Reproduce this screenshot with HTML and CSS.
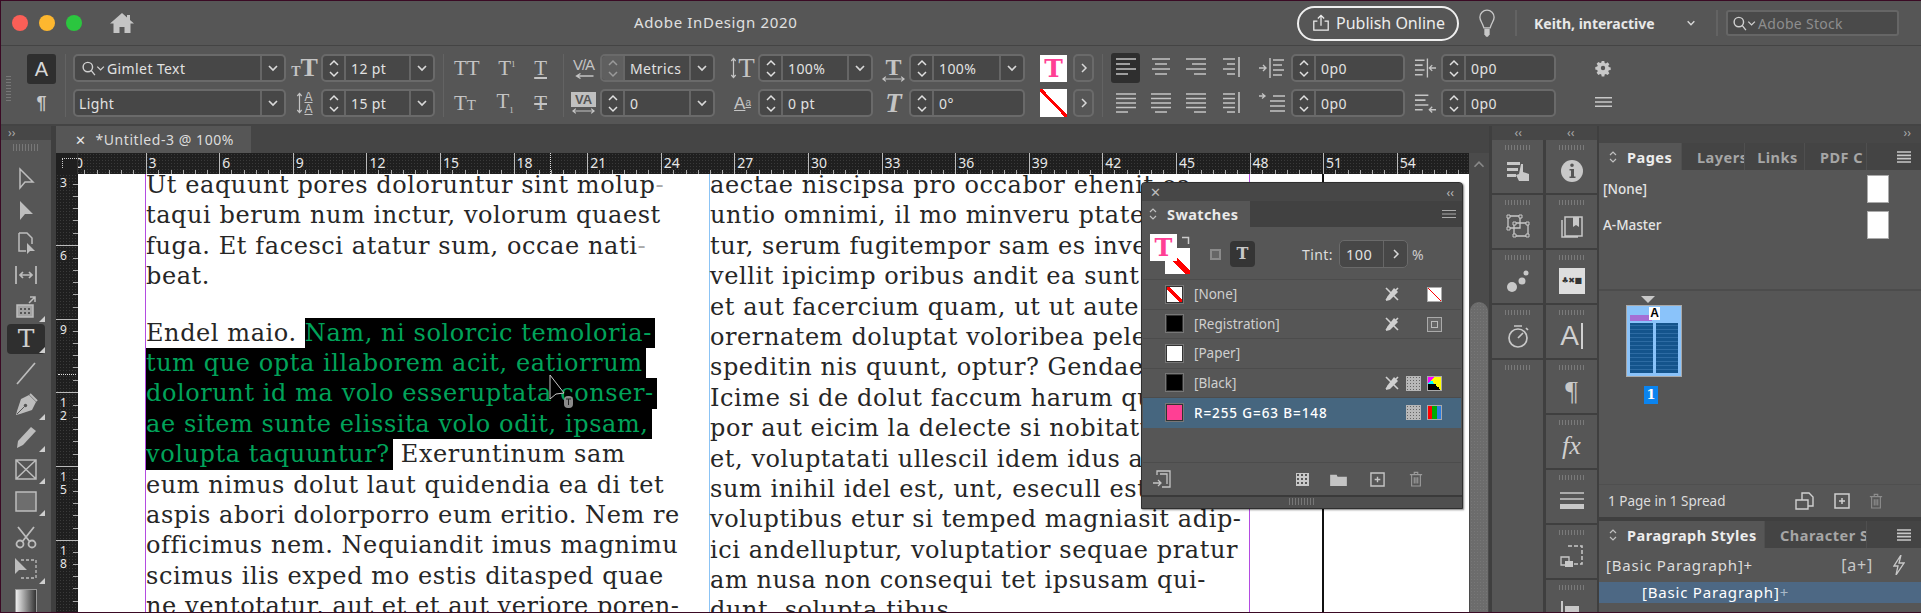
FILE: index.html
```html
<!DOCTYPE html>
<html lang="en">
<head>
<meta charset="utf-8">
<title>Adobe InDesign 2020</title>
<link rel="stylesheet" href="styles.css">
</head>
<body>
<svg class="defs" width="0" height="0" aria-hidden="true">
  <defs>
    <symbol id="chev" viewBox="0 0 12 12"><path d="M2 4l4 4 4-4" fill="none" stroke="currentColor" stroke-width="1.7"/></symbol>
    <symbol id="up" viewBox="0 0 12 8"><path d="M2 6l4-4 4 4" fill="none" stroke="currentColor" stroke-width="1.5"/></symbol>
    <symbol id="down" viewBox="0 0 12 8"><path d="M2 2l4 4 4-4" fill="none" stroke="currentColor" stroke-width="1.5"/></symbol>
    <symbol id="right" viewBox="0 0 12 12"><path d="M4 2l4 4-4 4" fill="none" stroke="currentColor" stroke-width="1.5"/></symbol>
    <symbol id="search" viewBox="0 0 28 18"><circle cx="8" cy="7.5" r="5" fill="none" stroke="currentColor" stroke-width="1.5"/><path d="M11.5 11l4 5M18 7l3.5 3.5L25 7" fill="none" stroke="currentColor" stroke-width="1.4"/></symbol>
    <symbol id="ham" viewBox="0 0 18 12"><path d="M0 1.5h18M0 6h18M0 10.500h18" stroke="currentColor" stroke-width="1.6"/></symbol>
    <symbol id="ham4" viewBox="0 0 14 12"><path d="M0 1h14M0 4.300h14M0 7.600h14M0 11h14" stroke="currentColor" stroke-width="1.7"/></symbol>
    <symbol id="updown" viewBox="0 0 10 14"><path d="M2 5l3-3 3 3M2 9l3 3 3-3" fill="none" stroke="currentColor" stroke-width="1.2"/></symbol>
    <symbol id="trash" viewBox="0 0 16 18"><path d="M1 4h14M6 4V1.500h4V4M3 4v13h10V4M6 7v7M8 7v7M10 7v7" fill="none" stroke="currentColor" stroke-width="1.3"/></symbol>
    <symbol id="plus" viewBox="0 0 16 16"><path d="M1 1h14v14H1zM8 5v6M5 8h6" fill="none" stroke="currentColor" stroke-width="1.5"/></symbol>
    <symbol id="nopen" viewBox="0 0 16 16"><path d="M2 2l12 12M14 2L2 14" stroke="currentColor" stroke-width="1.6"/><path d="M10 2l4 4-8 8-4 1 1-4z" fill="currentColor"/></symbol>
    <symbol id="al1" viewBox="0 0 20 22"><path d="M0 2h20M0 7h14M0 12h20M0 17h12" stroke="currentColor" stroke-width="1.6"/></symbol>
    <symbol id="al2" viewBox="0 0 20 22"><path d="M1 2h18M4 7h12M1 12h18M4 17h12" stroke="currentColor" stroke-width="1.6"/></symbol>
    <symbol id="al3" viewBox="0 0 20 22"><path d="M0 2h20M6 7h14M0 12h20M8 17h12" stroke="currentColor" stroke-width="1.6"/></symbol>
    <symbol id="al4" viewBox="0 0 20 22"><path d="M2 2h12M6 7h8M2 12h12M6 17h8M18 0v20" stroke="currentColor" stroke-width="1.6"/></symbol>
    <symbol id="al5" viewBox="0 0 20 22"><path d="M0 2h20M0 6.500h20M0 11h20M0 15.500h20M0 20h12" stroke="currentColor" stroke-width="1.6"/></symbol>
    <symbol id="al6" viewBox="0 0 20 22"><path d="M0 2h20M0 6.500h20M0 11h20M0 15.500h20M4 20h12" stroke="currentColor" stroke-width="1.6"/></symbol>
    <symbol id="al7" viewBox="0 0 20 22"><path d="M0 2h20M0 6.500h20M0 11h20M0 15.500h20M8 20h12" stroke="currentColor" stroke-width="1.6"/></symbol>
    <symbol id="al8" viewBox="0 0 20 22"><path d="M2 2h12M2 6.500h12M2 11h12M2 15.500h12M6 20h8M18 0v21" stroke="currentColor" stroke-width="1.6"/></symbol>
    <symbol id="ind1" viewBox="0 0 28 22"><path d="M0 11h6M4 8l3 3-3 3" fill="none" stroke="currentColor" stroke-width="1.4"/><path d="M11 1v20" stroke="currentColor" stroke-width="1.4"/><path d="M14 3h11M14 8h9M14 13h11M14 18h9" stroke="currentColor" stroke-width="1.6"/></symbol>
    <symbol id="ind2" viewBox="0 0 24 22"><path d="M1 3h10M1 8h8M1 13h10M1 18h8" stroke="currentColor" stroke-width="1.6"/><path d="M14 1v20M23 11h-6M19 8l-3 3 3 3" fill="none" stroke="currentColor" stroke-width="1.4"/></symbol>
    <symbol id="ind3" viewBox="0 0 28 22"><path d="M0 4h5M3 1.500L6 4 3 6.500" fill="none" stroke="currentColor" stroke-width="1.3"/><path d="M14 4h12M11 9h15M11 14h15M11 19h15" stroke="currentColor" stroke-width="1.6"/></symbol>
    <symbol id="ind4" viewBox="0 0 24 22"><path d="M1 3h14M1 8h11M1 13h14M1 18h8" stroke="currentColor" stroke-width="1.6"/><path d="M23 18h-6M19 15l-3 3 3 3" fill="none" stroke="currentColor" stroke-width="1.4"/></symbol>
    <symbol id="arrL" viewBox="0 0 20 6"><path d="M20 3H4M7 .5L3 3l4 2.500" fill="none" stroke="currentColor" stroke-width="1.300"/></symbol>
    <symbol id="arrLR" viewBox="0 0 24 6"><path d="M1 3h22M4 .5L1 3l3 2.500M20 .5L23 3l-3 2.500" fill="none" stroke="currentColor" stroke-width="1.300"/></symbol>
    <symbol id="arrUD" viewBox="0 0 8 24"><path d="M4 1v22M1.500 4L4 1l2.500 3M1.500 20L4 23l2.500-3" fill="none" stroke="currentColor" stroke-width="1.400"/></symbol>
  </defs>
</svg>

<div class="app">
  <header class="titlebar">
    <div class="lights">
      <span class="light red"></span><span class="light amber"></span><span class="light green"></span>
    </div>
    <svg class="home" viewBox="0 0 24 20"><path d="M12 0L0 10.500h3.500V20h6v-6h5v6h6v-9.500H24l-4-3.500V2h-3v2.400z" fill="currentColor"/></svg>
    <div class="apptitle">Adobe InDesign 2020</div>
    <button class="publish">
      <svg viewBox="0 0 20 20"><path d="M10 13V2M6.500 5L10 1.500 13.500 5M6 8H2v10h16V8h-4" fill="none" stroke="currentColor" stroke-width="1.4"/></svg>
      Publish Online
    </button>
    <svg class="bulb" viewBox="0 0 18 32"><path d="M9 1a8 8 0 0 0-8 8c0 4 3 6 4.500 12h7C14 15 17 13 17 9a8 8 0 0 0-8-8z" fill="none" stroke="currentColor" stroke-width="1.5"/><path d="M6 22h6v6l-2 3H8l-2-3z" fill="currentColor"/></svg>
    <span class="vsep s1"></span>
    <div class="user">Keith, interactive</div>
    <svg class="ic ic10 userchev"><use href="#chev"/></svg>
    <span class="vsep s2"></span>
    <div class="stock"><svg class="sicon"><use href="#search"/></svg><span>Adobe Stock</span></div>
  </header>

  <section class="control">
    <div class="grip g-ctl"></div>
    <div class="col c-mode">
      <div class="modebtn on">A</div>
      <div class="modebtn para-b">¶</div>
    </div>
    <span class="csep cs0"></span>
    <div class="col c-font">
      <div class="field fontf"><span class="val"><svg class="sicon"><use href="#search"/></svg>Gimlet Text</span><span class="drop"><svg class="ic ic12"><use href="#chev"/></svg></span></div>
      <div class="field fontf"><span class="val pad">Light</span><span class="drop"><svg class="ic ic12"><use href="#chev"/></svg></span></div>
    </div>
    <div class="col c-size">
      <div class="row"><span class="gly w25"><small>T</small><b>T</b></span>
        <div class="field w114"><span class="spin"><svg><use href="#up"/></svg><svg><use href="#down"/></svg></span><span class="val">12 pt</span><span class="drop"><svg class="ic ic12"><use href="#chev"/></svg></span></div></div>
      <div class="row"><span class="gly w25 lead"><svg class="ud8"><use href="#arrUD"/></svg><span class="stack"><i>A</i><i>A</i></span></span>
        <div class="field w114"><span class="spin"><svg><use href="#up"/></svg><svg><use href="#down"/></svg></span><span class="val">15 pt</span><span class="drop"><svg class="ic ic12"><use href="#chev"/></svg></span></div></div>
    </div>
    <span class="csep cs1"></span>
    <div class="col c-case">
      <div class="row caps"><span>TT</span><span>T<sup>1</sup></span><span class="ul">T</span></div>
      <div class="row caps"><span>T<small>T</small></span><span>T<sub>1</sub></span><span class="st">T</span></div>
    </div>
    <span class="csep cs2"></span>
    <div class="col c-kern">
      <div class="row"><span class="gly w25 kern"><span>V/A</span><svg class="ar"><use href="#arrL"/></svg></span>
        <div class="field w115"><span class="spin lit"><svg><use href="#up"/></svg><svg><use href="#down"/></svg></span><span class="val">Metrics</span><span class="drop"><svg class="ic ic12"><use href="#chev"/></svg></span></div></div>
      <div class="row"><span class="gly w25 kern"><span class="track">VA</span><svg class="ar"><use href="#arrLR"/></svg></span>
        <div class="field w115"><span class="spin"><svg><use href="#up"/></svg><svg><use href="#down"/></svg></span><span class="val">0</span><span class="drop"><svg class="ic ic12"><use href="#chev"/></svg></span></div></div>
    </div>
    <div class="col c-scale">
      <div class="row"><span class="gly w23 big"><svg class="ud8"><use href="#arrUD"/></svg>T</span>
        <div class="field w115"><span class="spin"><svg><use href="#up"/></svg><svg><use href="#down"/></svg></span><span class="val">100%</span><span class="drop"><svg class="ic ic12"><use href="#chev"/></svg></span></div></div>
      <div class="row"><span class="gly w23 base">A<sup>a</sup></span>
        <div class="field w115"><span class="spin"><svg><use href="#up"/></svg><svg><use href="#down"/></svg></span><span class="val">0 pt</span></div></div>
    </div>
    <div class="col c-scale2">
      <div class="row"><span class="gly w23 big vert"><span>T</span><svg class="ar"><use href="#arrLR"/></svg></span>
        <div class="field w116"><span class="spin"><svg><use href="#up"/></svg><svg><use href="#down"/></svg></span><span class="val">100%</span><span class="drop"><svg class="ic ic12"><use href="#chev"/></svg></span></div></div>
      <div class="row"><span class="gly w23 big ital">T</span>
        <div class="field w116"><span class="spin"><svg><use href="#up"/></svg><svg><use href="#down"/></svg></span><span class="val">0°</span></div></div>
    </div>
    <div class="col c-fill">
      <div class="row"><span class="fillT">T</span><span class="morebtn"><svg class="ic ic12"><use href="#right"/></svg></span></div>
      <div class="row"><span class="fillNone"></span><span class="morebtn"><svg class="ic ic12"><use href="#right"/></svg></span></div>
    </div>
    <span class="csep cs3"></span>
    <div class="col c-align">
      <div class="row al"><span class="alb on"><svg><use href="#al1"/></svg></span><span class="alb"><svg><use href="#al2"/></svg></span><span class="alb"><svg><use href="#al3"/></svg></span><span class="alb"><svg><use href="#al4"/></svg></span></div>
      <div class="row al"><span class="alb"><svg><use href="#al5"/></svg></span><span class="alb"><svg><use href="#al6"/></svg></span><span class="alb"><svg><use href="#al7"/></svg></span><span class="alb"><svg><use href="#al8"/></svg></span></div>
    </div>
    <div class="col c-ind">
      <div class="row"><svg class="indic"><use href="#ind1"/></svg>
        <div class="field w114"><span class="spin"><svg><use href="#up"/></svg><svg><use href="#down"/></svg></span><span class="val">0p0</span></div></div>
      <div class="row"><svg class="indic"><use href="#ind3"/></svg>
        <div class="field w114"><span class="spin"><svg><use href="#up"/></svg><svg><use href="#down"/></svg></span><span class="val">0p0</span></div></div>
    </div>
    <div class="col c-ind2">
      <div class="row"><svg class="indic2"><use href="#ind2"/></svg>
        <div class="field w115"><span class="spin"><svg><use href="#up"/></svg><svg><use href="#down"/></svg></span><span class="val">0p0</span></div></div>
      <div class="row"><svg class="indic2"><use href="#ind4"/></svg>
        <div class="field w115"><span class="spin"><svg><use href="#up"/></svg><svg><use href="#down"/></svg></span><span class="val">0p0</span></div></div>
    </div>
    <div class="col c-end">
      <svg class="gear" viewBox="0 0 16 16"><path d="M6.500 0h3l.4 2.200 1.400.6L13.200 1.500l2.100 2.100-1.300 1.900.6 1.400 2.200.4v3l-2.200.4-.6 1.400 1.300 1.900-2.100 2.100-1.900-1.300-1.400.6-.4 2.200h-3l-.4-2.200-1.400-.6-1.900 1.300L.7 13.500 2 11.600l-.6-1.400L-.8 9.800v-3l2.200-.4.6-1.400L.7 3.100 2.800 1l1.900 1.300 1.400-.6zM8 5.500a2.500 2.500 0 1 0 0 5 2.500 2.500 0 0 0 0-5z" fill="currentColor"/></svg>
      <svg class="endham"><use href="#ham"/></svg>
    </div>
  </section>

  <main class="work">
    <aside class="tools">
      <div class="collapse">››</div>
      <div class="grip g-h"></div>
      <div class="tool"><svg viewBox="0 0 24 24"><path d="M6 2v19l5-6h8z" fill="none" stroke="currentColor" stroke-width="1.5"/></svg></div>
      <div class="tool"><svg viewBox="0 0 24 24"><path d="M6 2v19l5-6h8z" fill="currentColor"/></svg></div>
      <div class="tool"><svg viewBox="0 0 24 24"><path d="M5 2h8l5 5v6M5 2v18h7" fill="none" stroke="currentColor" stroke-width="1.500"/><path d="M13 12v11l3-3h5z" fill="currentColor"/></svg></div>
      <div class="tool"><svg viewBox="0 0 24 24"><path d="M2 3v18M22 3v18M6 12h12M9 9l-3 3 3 3M15 9l3 3-3 3" fill="none" stroke="currentColor" stroke-width="1.700"/></svg></div>
      <div class="tool mark"><svg viewBox="0 0 24 24"><path d="M3 10v12h16V10zM16 2h5v5M21 2l-6 6" fill="none" stroke="currentColor" stroke-width="1.500"/><path d="M3 10h16v12H3z" fill="currentColor" opacity=".75"/><path d="M6 13h2v2H6zM10 13h2v2h-2zM14 13h2v2h-2zM6 17h2v2H6zM10 17h2v2h-2zM14 17h2v2h-2z" fill="#555"/></svg></div>
      <div class="tool tool-t mark">T</div>
      <div class="tool"><svg viewBox="0 0 24 24"><path d="M3 23L21 2" stroke="currentColor" stroke-width="1.700"/></svg></div>
      <div class="tool mark"><svg viewBox="0 0 24 24"><path d="M15 2l7 7-4 8-12 4-4 1 1-4L7 6z" fill="currentColor"/><circle cx="11.500" cy="12.500" r="1.700" fill="#555"/><path d="M3 21l7.500-7.500" stroke="#555" stroke-width="1"/><path d="M16 1l7 7" stroke="currentColor" stroke-width="2"/></svg></div>
      <div class="tool mark"><svg viewBox="0 0 24 24"><path d="M17 2l5 4L9 20l-6 3 1-7z" fill="currentColor"/></svg></div>
      <div class="tool mark"><svg viewBox="0 0 24 24"><path d="M2 3h20v19H2zM2 3l20 19M22 3L2 22" fill="none" stroke="currentColor" stroke-width="1.500"/></svg></div>
      <div class="tool mark"><svg viewBox="0 0 24 24"><path d="M2 3h20v19H2z" fill="#6e6e6e" stroke="currentColor" stroke-width="1.500"/></svg></div>
      <div class="tool tool-gap"><svg viewBox="0 0 24 24"><circle cx="6" cy="19" r="3.500" fill="none" stroke="currentColor" stroke-width="1.800"/><circle cx="18" cy="19" r="3.500" fill="none" stroke="currentColor" stroke-width="1.800"/><path d="M4 2l12 15M20 2L8 17" stroke="currentColor" stroke-width="1.800"/></svg></div>
      <div class="tool mark"><svg viewBox="0 0 24 24"><path d="M7 3h15v18H7" fill="none" stroke="currentColor" stroke-width="1.300" stroke-dasharray="3 2"/><path d="M1 1v16l4-4h8z" fill="currentColor"/></svg></div>
      <div class="tool"><div class="gradbox"></div></div>
    </aside>

    <section class="doc">
      <div class="tabs">
        <div class="doctab"><span class="x">✕</span><span>*Untitled-3 @ 100%</span></div>
      </div>
      <div class="hruler">
        <div class="corner"></div>
        <div class="hticks">
          <span>0</span><span>3</span><span>6</span><span>9</span><span>12</span><span>15</span><span>18</span><span>21</span><span>24</span><span>27</span><span>30</span><span>33</span><span>36</span><span>39</span><span>42</span><span>45</span><span>48</span><span>51</span><span>54</span>
        </div>
        <i class="hmark"></i>
      </div>
      <div class="canvas">
        <div class="vruler">
          <span class="first">3</span><span>6</span><span>9</span><span><b>1</b><b>2</b></span><span><b>1</b><b>5</b></span><span><b>1</b><b>8</b></span>
        </div>
        <div class="sheet">
          <div class="tcol one">
            <div class="ln">Ut eaquunt pores doloruntur sint molup<em>-</em></div>
            <div class="ln">taqui berum num inctur, volorum quaest</div>
            <div class="ln">fuga. Et facesci atatur sum, occae nati<em>-</em></div>
            <div class="ln">beat.</div>
            <div class="ln blank">&nbsp;</div>
            <div class="ln">Endel maio. <span class="sel">Nam, ni solorcic temoloria-</span></div>
            <div class="ln"><span class="sel">tum que opta illaborem acit, eatiorrum</span></div>
            <div class="ln"><span class="sel">dolorunt id ma volo esseruptata conser-</span></div>
            <div class="ln"><span class="sel">ae sitem sunte elissita volo odit, ipsam,</span></div>
            <div class="ln"><span class="sel">volupta taquuntur?</span> Exeruntinum sam</div>
            <div class="ln">eum nimus dolut laut quidendia ea di tet</div>
            <div class="ln">aspis abori dolorporro eum eritio. Nem re</div>
            <div class="ln">officimus nem. Nequiandit imus magnimu</div>
            <div class="ln">scimus ilis exped mo estis ditasped quae</div>
            <div class="ln">ne ventotatur, aut et et aut veriore poren-</div>
          </div>
          <div class="tcol two">
            <div class="ln">aectae niscipsa pro occabor ehenit ea</div>
            <div class="ln">untio omnimi, il mo minveru ptate</div>
            <div class="ln">tur, serum fugitempor sam es inve</div>
            <div class="ln">vellit ipicimp oribus andit ea sunt</div>
            <div class="ln">et aut facercium quam, ut ut aute</div>
            <div class="ln">orernatem doluptat voloribea pele</div>
            <div class="ln">speditin nis quunt, optur? Gendae</div>
            <div class="ln">Icime si de dolut faccum harum qu</div>
            <div class="ln">por aut eicim la delecte si nobitatu</div>
            <div class="ln">et, voluptatati ullescil idem idus a</div>
            <div class="ln">sum inihil idel est, unt, esecull est</div>
            <div class="ln">voluptibus etur si temped magniasit adip-</div>
            <div class="ln">ici andelluptur, voluptatior sequae pratur</div>
            <div class="ln">am nusa non consequi tet ipsusam qui-</div>
            <div class="ln">dunt, solupta tibus.</div>
            <div class="ln">&nbsp;</div>
          </div>
          <div class="tcol three"></div>
        </div>
      </div>
      <i class="vmark"></i>
      <svg class="cursor" viewBox="0 0 24 36"><path d="M1 1v24l6-5 8-1z" fill="#000" stroke="#c8c8c8" stroke-width="1"/><rect x="15" y="22" width="9" height="12" rx="4" fill="#8a8a8a"/><path d="M17 25h5M19.500 25v6" stroke="#222" stroke-width="1"/></svg>
    </section>

    <div class="vscroll">
      <div class="vs-top"></div>
      <div class="vs-arrow"><svg><use href="#up"/></svg></div>
      <div class="vs-thumb"></div>
    </div>

    <div class="dock">
      <div class="dock-head"><span>‹‹</span><span>‹‹</span></div>
      <div class="dock-cols">
        <div class="dcol">
          <div class="cell"><svg viewBox="0 0 24 24"><path d="M1 3h13v3H1zM1 9h11v3H1zM1 15h9v3H1z" fill="currentColor"/><path d="M15 5h2v8l6 2v7H13l-3-6 3-1z" fill="currentColor"/></svg></div>
          <div class="cell"><svg viewBox="0 0 24 24"><path d="M2 2h12v12H2zM8 9h14v13H8z" fill="none" stroke="currentColor" stroke-width="1.300"/><path d="M1 1h3v3H1zM13 1h3v3h-3zM1 13h3v3H1zM7 8h3v3H7zM20 8h3v3h-3zM7 20h3v3H7zM20 20h3v3h-3z" fill="#555" stroke="currentColor"/></svg></div>
          <div class="cell"><svg viewBox="0 0 24 24"><circle cx="6" cy="18" r="5" fill="currentColor"/><circle cx="16" cy="12" r="3.500" fill="currentColor"/><circle cx="20" cy="4" r="2.500" fill="currentColor"/></svg></div>
          <div class="cell"><svg viewBox="0 0 24 24"><circle cx="12" cy="14" r="9" fill="none" stroke="currentColor" stroke-width="1.700"/><path d="M8 2h8M12 14l5-5M20 4l2 2" stroke="currentColor" stroke-width="1.700"/></svg></div>
          <div class="cell open"></div>
        </div>
        <div class="dcol">
          <div class="cell"><svg viewBox="0 0 24 24"><circle cx="12" cy="12" r="11" fill="currentColor"/><path d="M12 4.500a1.800 1.800 0 1 1 0 3.600 1.800 1.800 0 0 1 0-3.600zM9.500 10H14v7.500h1.500V19h-6v-1.500H11V11.500H9.500z" fill="#555"/></svg></div>
          <div class="cell"><svg viewBox="0 0 24 24"><path d="M5 3h17v19H5zM2 6v17h16" fill="none" stroke="currentColor" stroke-width="1.500"/><path d="M13 3h6v10l-3-2-3 2z" fill="currentColor"/></svg></div>
          <div class="cell"><div class="glyphbox">♣✖■</div></div>
          <div class="cell charA">A<i></i></div>
          <div class="cell para"><span>¶</span></div>
          <div class="cell fxc">fx</div>
          <div class="cell"><svg viewBox="0 0 24 24"><path d="M0 4h24M0 10h24" stroke="currentColor" stroke-width="1.400"/><path d="M0 15h24v5H0z" fill="currentColor"/></svg></div>
          <div class="cell"><svg viewBox="0 0 24 24"><path d="M8 2h14v18H12" fill="none" stroke="currentColor" stroke-width="1.500" stroke-dasharray="4 2"/><path d="M1 13h8v8H1z" fill="none" stroke="currentColor" stroke-width="1.300"/><path d="M5 17h8v6H5z" fill="currentColor"/></svg></div>
          <div class="cell"><svg viewBox="0 0 24 24"><path d="M2 2v20" stroke="currentColor" stroke-width="2"/><path d="M5 7h14v12H5z" fill="currentColor"/></svg></div>
        </div>
      </div>
    </div>

    <div class="panels">
      <div class="p-head"><span>››</span></div>
      <section class="pages">
        <div class="ptabs">
          <div class="ptab on w83"><svg class="ud"><use href="#updown"/></svg>Pages</div>
          <div class="ptab w63 clip">Layers</div>
          <div class="ptab w60 links">Links</div>
          <div class="ptab w62 clip">PDF C</div>
          <svg class="ham4"><use href="#ham4"/></svg>
        </div>
        <div class="masters">
          <div class="mrow"><span>[None]</span><i></i></div>
          <div class="mrow"><span>A-Master</span><i></i></div>
        </div>
        <div class="pagearea">
          <div class="tri"></div>
          <div class="thumb">
            <div class="th-a">A</div>
            <div class="th-bar"></div>
            <div class="th-cols"><div></div><div></div></div>
          </div>
          <div class="pnum">1</div>
        </div>
        <div class="pfoot">
          <span>1 Page in 1 Spread</span>
          <svg class="pf1" viewBox="0 0 20 18"><path d="M1 8h12v9H1zM7 8V1h7l4 4v9h-5" fill="none" stroke="currentColor" stroke-width="1.400"/></svg>
          <svg class="pf2"><use href="#plus"/></svg>
          <svg class="pf3"><use href="#trash"/></svg>
        </div>
      </section>
      <section class="pstyles">
        <div class="ptabs">
          <div class="ptab on w166"><svg class="ud"><use href="#updown"/></svg>Paragraph Styles</div>
          <div class="ptab w102 clip">Character S</div>
          <svg class="ham4"><use href="#ham4"/></svg>
        </div>
        <div class="psrow"><span>[Basic Paragraph]+</span><em>[a+]</em><svg viewBox="0 0 12 20"><path d="M8 0L1 11h4l-2 9 8-12H6z" fill="none" stroke="currentColor" stroke-width="1.300"/></svg></div>
        <div class="pssel">[Basic Paragraph]<em>+</em></div>
      </section>
    </div>
  </main>

  <aside class="swatches">
    <div class="sw-top"><span>✕</span><span class="cc">‹‹</span></div>
    <div class="sw-tabs">
      <div class="sw-tab"><svg class="ud"><use href="#updown"/></svg>Swatches</div>
      <svg class="swham"><use href="#ham"/></svg>
    </div>
    <div class="sw-ctl">
      <div class="fs">
        <div class="fs-s"></div>
        <div class="fs-f">T</div>
        <svg class="fs-swap" viewBox="0 0 8 8"><path d="M0 1.500h6.500V8" fill="none" stroke="currentColor" stroke-width="1.500"/></svg>
      </div>
      <span class="boxbtn"></span>
      <span class="tbtn">T</span>
      <span class="tint">Tint:</span>
      <div class="field tintf"><span class="val">100</span><span class="drop"><svg class="ic ic12"><use href="#right"/></svg></span></div>
      <span class="pct">%</span>
    </div>
    <div class="sw-list">
      <div class="sw-row"><i class="chip none"></i><span>[None]</span><svg class="t1"><use href="#nopen"/></svg><i class="t3 nonebox"></i></div>
      <div class="sw-row"><i class="chip black"></i><span>[Registration]</span><svg class="t1"><use href="#nopen"/></svg><i class="t3 reg"></i></div>
      <div class="sw-row"><i class="chip white"></i><span>[Paper]</span></div>
      <div class="sw-row"><i class="chip black"></i><span>[Black]</span><svg class="t1"><use href="#nopen"/></svg><i class="t2 dots"></i><i class="t3 cmyk"></i></div>
      <div class="sw-row on"><i class="chip pink"></i><span>R=255 G=63 B=148</span><i class="t2 dots"></i><i class="t3 rgb"></i></div>
      <div class="sw-empty"></div>
    </div>
    <div class="sw-foot">
      <svg class="sf0" viewBox="0 0 18 18"><path d="M4 5V1h13v16H9M7 4h7v10" fill="none" stroke="currentColor" stroke-width="1.300"/><path d="M0 13h7M5 10l3 3-3 3" fill="none" stroke="currentColor" stroke-width="1.300"/></svg>
      <i class="sf1"></i>
      <svg class="sf2" viewBox="0 0 18 14"><path d="M0 2h7l1 2h10v10H0z" fill="currentColor"/></svg>
      <svg class="sf3"><use href="#plus"/></svg>
      <svg class="sf4"><use href="#trash"/></svg>
    </div>
    <div class="sw-grip"><div class="grip g-h wide"></div></div>
  </aside>
</div>
</body>
</html>
```

FILE: styles.css
```css
* { box-sizing: border-box; }
html, body { margin: 0; padding: 0; }
body { width: 1921px; height: 613px; overflow: hidden; background: #3a0a24; font-family: "Noto Sans", "Open Sans", sans-serif; color: #e4e4e4; }
.defs { position: absolute; }
button { font: inherit; color: inherit; }

.app { position: relative; width: 1920px; height: 611px; margin: 1px 0 0 1px; display: flex; flex-direction: column; overflow: hidden; background: #555; }

/* title bar */
.titlebar { height: 45px; flex: none; display: flex; align-items: center; background: #565656; border-bottom: 1px solid #444; position: relative; }
.lights { display: flex; gap: 11px; margin-left: 11px; }
.light { width: 16px; height: 16px; border-radius: 50%; }
.red { background: #fb5f57; }
.amber { background: #fdb72f; }
.green { background: #2bc63f; }
.home { width: 24px; height: 20px; margin-left: 28px; color: #c4c4c4; }
.apptitle { margin-left: 500px; width: 167px; font-size: 15px; letter-spacing: .65px; white-space: nowrap; color: #e0e0e0; padding-bottom: 2px; }
.publish { margin-left: 496px; width: 162px; height: 35px; display: flex; align-items: center; gap: 6px; padding: 0 0 0 13px; border: 2px solid #efefef; border-radius: 18px; background: transparent; font-size: 16px; white-space: nowrap; color: #ededed; }
.publish svg { width: 18px; height: 18px; }
.bulb { width: 16px; height: 29px; margin-left: 20px; color: #c8c8c8; }
.vsep { width: 2px; height: 26px; background: #636363; }
.s1 { margin-left: 20px; }
.s2 { margin-left: 20px; }
.user { margin-left: 17px; width: 140px; font-weight: 700; font-size: 14px; white-space: nowrap; color: #e8e8e8; }
.userchev { margin-left: 12px; }
.stock { margin-left: 8px; width: 173px; height: 26px; display: flex; align-items: center; padding-left: 3px; border: 2px solid #666; border-radius: 3px; background: #4a4a4a; font-size: 14px; color: #8e8e8e; letter-spacing: .3px; }
.sicon { width: 27px; height: 17px; flex: none; color: #d0d0d0; }
.ic { display: block; color: #d8d8d8; }
.ic10 { width: 10px; height: 10px; }
.ic12 { width: 12px; height: 12px; }

/* control strip */
.control { height: 80px; flex: none; display: flex; padding-top: 8px; background: #565656; border-bottom: 2px solid #444; font-size: 14px; color: #e0e0e0; }
.col { display: flex; flex-direction: column; gap: 7px; flex: none; }
.row { height: 28px; display: flex; align-items: center; gap: 4px; }
.grip { background: repeating-linear-gradient(90deg, #777 0 1px, transparent 1px 3px); }
.g-ctl { width: 5px; height: 26px; margin: 21px 0 0 5px; background: repeating-linear-gradient(0deg, #777 0 1px, transparent 1px 3px); flex: none; }
.c-mode { margin-left: 16px; width: 30px; gap: 0; }
.modebtn { width: 29px; height: 30px; margin-bottom: 4px; display: flex; align-items: center; justify-content: center; font: 400 20px/1 "Liberation Sans", sans-serif; color: #c8c8c8; border-radius: 3px; }
.modebtn.on { background: #2f2f2f; color: #d8d8d8; }
.para-b { font-weight: 700; font-size: 18px; }
.csep { width: 1px; height: 63px; background: #636363; flex: none; }
.cs0 { margin-left: 8px; }
.c-font { margin-left: 7px; }
.field { display: flex; align-items: stretch; height: 28px; border: 2px solid #6a6a6a; border-radius: 5px; background: #474747; flex: none; font-size: 14px; letter-spacing: .4px; color: #e2e2e2; }
.fontf { width: 213px; }
.w114 { width: 114px; }
.w115 { width: 115px; }
.w116 { width: 116px; }
.val { flex: 1; display: flex; align-items: center; padding-left: 5px; white-space: nowrap; }
.val.pad { padding-left: 4px; }
.drop { width: 24px; flex: none; border-left: 2px solid #666; display: flex; align-items: center; justify-content: center; }
.spin { width: 23px; flex: none; display: flex; flex-direction: column; align-items: center; justify-content: center; gap: 3px; border-right: 2px solid #666; color: #e0e0e0; }
.spin svg { width: 12px; height: 8px; display: block; }
.spin.lit { background: #5f5f5f; border-radius: 3px 0 0 3px; color: #9a9a9a; }
.c-size { margin-left: 6px; }
.gly { display: flex; align-items: center; justify-content: center; flex: none; font-family: "Liberation Serif", serif; color: #c4c4c4; font-size: 26px; font-weight: 700; line-height: 1; height: 28px; white-space: nowrap; }
.w25 { width: 25px; }
.w23 { width: 23px; }
.gly small { font-size: 14px; align-self: flex-end; margin-bottom: 3px; }
.ud8 { width: 7px; height: 22px; flex: none; color: #c4c4c4; }
.stack { display: flex; flex-direction: column; }
.gly.lead { gap: 1px; font-family: "Liberation Sans", sans-serif; font-size: 12px; font-weight: 400; }
.gly.lead i { font-style: normal; height: 12px; text-decoration: underline; }
.gly.kern { flex-direction: column; gap: 1px; font-family: "Liberation Sans", sans-serif; font-size: 15px; font-weight: 400; letter-spacing: -1px; }
.track { background: #c0c0c0; color: #555; width: 25px; height: 15px; line-height: 15px; text-align: center; font-weight: 700; letter-spacing: 0; font-size: 13px; }
.ar { width: 23px; height: 6px; flex: none; color: #c4c4c4; display: block; }
.gly.big { font-weight: 400; font-size: 27px; gap: 1px; }
.gly.vert { flex-direction: column; gap: 0; font-size: 24px; font-weight: 700; }
.gly.vert span { height: 21px; }
.gly.base { font-family: "Liberation Sans", sans-serif; font-weight: 400; font-size: 17px; text-decoration: underline; }
.gly.base sup { font-size: 10px; }
.gly.ital { font-style: italic; font-weight: 700; }
.cs1 { margin-left: 8px; }
.c-case { margin-left: 10px; width: 93px; }
.caps { justify-content: space-between; font-family: "Liberation Serif", serif; font-size: 21px; color: #c4c4c4; gap: 0; }
.caps span { line-height: 1; white-space: nowrap; }
.caps small { font-size: 15px; }
.caps sup, .caps sub { font-size: 9px; }
.caps .ul { text-decoration: underline; }
.caps .st { text-decoration: line-through; }
.cs2 { margin-left: 16px; }
.c-kern { margin-left: 7px; }
.c-scale { margin-left: 16px; }
.c-scale2 { margin-left: 9px; }
.c-fill { margin-left: 15px; }
.c-fill .row { gap: 6px; }
.fillT { width: 27px; height: 27px; background: #fff; color: #ff3f94; font: 700 25px/27px "DejaVu Serif", serif; text-align: center; flex: none; }
.fillNone { width: 27px; height: 28px; flex: none; background: linear-gradient(to top right, #fff 0 46%, #f00 46% 54%, #fff 54%); }
.morebtn { width: 21px; height: 28px; display: flex; align-items: center; justify-content: center; border: 2px solid #6a6a6a; border-radius: 5px; flex: none; }
.cs3 { margin-left: 8px; }
.c-align { margin-left: 8px; width: 140px; }
.al { gap: 6px; }
.alb { width: 29px; height: 30px; flex: none; display: flex; align-items: center; justify-content: center; border-radius: 3px; color: #c4c4c4; }
.alb svg { width: 20px; height: 22px; }
.alb.on { background: #2f2f2f; }
.c-ind { margin-left: 8px; }
.c-ind2 { margin-left: 9px; }
.indic { width: 28px; height: 22px; color: #c4c4c4; flex: none; }
.indic2 { width: 23px; height: 22px; color: #c4c4c4; flex: none; }
.c-end { margin-left: 26px; width: 40px; align-items: center; gap: 0; padding-left: 2px; }
.gear { width: 14px; height: 16px; margin-top: 6px; color: #c8c8c8; overflow: visible; }
.endham { width: 17px; height: 12px; margin-top: 20px; color: #c8c8c8; }

/* work area */
.work { flex: 1; min-height: 0; display: flex; background: #3f3f3f; }
.tools { width: 50px; flex: none; background: #565656; display: flex; flex-direction: column; align-items: center; }
.collapse { width: 100%; height: 17px; padding-left: 7px; background: #474747; font-size: 12px; line-height: 14px; color: #aaa; }
.g-h { width: 26px; height: 7px; margin-top: 4px; margin-bottom: 12px; flex: none; }
.tool { width: 38px; height: 32px; display: flex; align-items: center; justify-content: center; position: relative; flex: none; color: #bdbdbd; }
.tool svg { width: 24px; height: 24px; }
.tool-t { height: 30px; margin: 1px 0 3px; background: #2f2f2f; border-radius: 4px; font: 400 25px/30px "DejaVu Serif", serif; color: #cfcfcf; }
.tool-gap { margin-top: 4px; }
.mark::after { content: ""; position: absolute; right: 0; bottom: 1px; border: 3px solid transparent; border-right-color: #cfcfcf; border-bottom-color: #cfcfcf; }
.gradbox { width: 22px; height: 25px; background: linear-gradient(90deg, #eee, #333); border: 1px solid #999; }

.doc { flex: none; width: 1413px; margin-left: 5px; display: flex; flex-direction: column; position: relative; }
.tabs { height: 27px; flex: none; background: #454545; }
.doctab { width: 195px; height: 27px; display: flex; align-items: center; padding-left: 19px; gap: 9px; background: #565656; font-size: 14px; letter-spacing: .55px; color: #dcdcdc; white-space: nowrap; }
.doctab .x { font-size: 13px; color: #e8e8e8; }
.hruler { height: 21px; flex: none; display: flex; overflow: hidden; background: #1f1f1f radial-gradient(#3a3a3a .5px, transparent .6px) 0 0 / 3px 3px; position: relative; }
.corner { width: 22px; flex: none; background: #1f1f1f; border-right: 1px solid #333; position: relative; z-index: 1; }
.corner::after { content: ""; position: absolute; left: 6px; top: 5px; width: 14px; height: 9px; border-top: 1px dotted #ccc; border-left: 1px dotted #ccc; }
.hticks { display: flex; flex: none; margin-left: -6px; }
.hticks span { width: 73.6px; flex: none; height: 21px; padding: 1px 0 0 2px; font-size: 14px; line-height: 18px; color: #e8e8e8; border-left: 1px solid #bbb; background: repeating-linear-gradient(90deg, transparent 0 11.27px, #aaa 11.27px 12.27px) left bottom / 100% 4px no-repeat; }
.hmark { position: absolute; left: 494px; top: 0; height: 21px; border-left: 1px dotted #e0e0e0; }
.vmark { position: absolute; left: 2px; top: 248px; width: 18px; border-top: 1px dotted #e0e0e0; }

.canvas { flex: 1; min-height: 0; display: flex; overflow: hidden; background: #fff; }
.vruler { width: 22px; flex: none; display: flex; flex-direction: column; background: #1f1f1f radial-gradient(#3a3a3a .5px, transparent .6px) 0 0 / 3px 3px; overflow: hidden; }
.vruler span { height: 73.6px; flex: none; display: flex; flex-direction: column; padding: 3px 0 0 4px; border-top: 1px solid #bbb; font-size: 12px; line-height: 13px; color: #e8e8e8; background: repeating-linear-gradient(0deg, transparent 0 11.27px, #aaa 11.27px 12.27px) right top / 5px 100% no-repeat; }
.vruler .first { margin-top: -2.4px; }
.vruler b { font-weight: 400; display: block; }

.sheet { flex: 1; display: flex; margin-top: -4px; padding-left: 67px; font-family: "DejaVu Serif", serif; font-size: 24px; line-height: 30.4px; color: #262626; }
.tcol { flex: none; height: 500px; white-space: nowrap; }
.one { width: 564px; border-left: 1px solid #b44be1; }
.two { width: 541px; border-left: 1px solid #8cc4f5; border-right: 1px solid #b44be1; }
.three { width: 74px; border-right: 2px solid #111; }
.ln { height: 30.4px; letter-spacing: .58px; font-weight: 400; }
.ln.blank { height: 26px; }
.ln em { font-style: normal; color: #aaa; }
.sel { display: inline-block; height: 30.4px; padding-right: 3px; background: #000; color: #00a35a; }
.cursor { position: absolute; left: 493px; top: 248px; width: 24px; height: 36px; }

.vscroll { width: 20px; flex: none; background: #4b4b4b; display: flex; flex-direction: column; align-items: center; }
.vs-top { height: 27px; width: 100%; background: #454545; flex: none; }
.vs-arrow { height: 149px; flex: none; color: #888; padding-top: 7px; }
.vs-arrow svg { width: 14px; height: 9px; display: block; }
.vs-thumb { flex: 1; width: 18px; border-radius: 9px 9px 0 0; background: #6c6c6c radial-gradient(#777 .5px, transparent .6px) 0 0 / 3px 3px; }

.dock { width: 105px; flex: none; margin-left: 3px; display: flex; flex-direction: column; }
.dock-head { height: 17px; display: flex; justify-content: space-around; background: #474747; font-size: 12px; line-height: 14px; color: #aaa; }
.dock-cols { flex: 1; display: flex; gap: 3px; }
.dcol { width: 51px; flex: none; display: flex; flex-direction: column; gap: 2px; }
.cell { height: 53px; flex: none; display: flex; align-items: center; justify-content: center; padding-top: 9px; background: #565656 repeating-linear-gradient(90deg, #7a7a7a 0 1px, transparent 1px 3px) center 5px / 26px 5px no-repeat; color: #c8c8c8; }
.cell svg { width: 24px; height: 24px; }
.cell.open { flex: 1; }
.glyphbox { width: 26px; height: 26px; background: #dedede; color: #333; font: 700 8px/26px "DejaVu Sans", sans-serif; text-align: center; white-space: nowrap; overflow: hidden; letter-spacing: -.5px; }
.charA { font: 400 28px/1 "Liberation Sans", sans-serif; color: #d0d0d0; }
.charA i { width: 2px; height: 26px; margin-left: 2px; background: #d0d0d0; }
.para { font: 400 28px/1 "Liberation Serif", serif; }
.fxc { font: italic 400 26px/1 "Liberation Serif", serif; color: #d0d0d0; }

.panels { flex: 1; min-width: 0; margin-left: 2px; display: flex; flex-direction: column; }
.p-head { height: 17px; flex: none; background: #474747; display: flex; justify-content: flex-end; padding-right: 10px; font-size: 12px; line-height: 14px; color: #aaa; }
.pages { height: 374px; flex: none; display: flex; flex-direction: column; background: #565656; }
.ptabs { height: 27px; flex: none; display: flex; align-items: center; background: #444; position: relative; }
.ptab { height: 27px; flex: none; display: flex; align-items: center; justify-content: center; font-weight: 700; font-size: 14.500px; letter-spacing: .5px; color: #a6a6a6; border-right: 1px solid #4f4f4f; white-space: nowrap; overflow: hidden; }
.ptab.on { background: #565656; color: #ededed; justify-content: flex-start; padding-left: 9px; }
.ptab.clip { justify-content: flex-start; padding-left: 15px; }
.ptab.links { padding-left: 6px; }
.ud { width: 10px; height: 14px; margin-right: 9px; flex: none; color: #c0c0c0; }
.w83 { width: 83px; }
.w63 { width: 63px; }
.w60 { width: 60px; }
.w62 { width: 62px; }
.w166 { width: 166px; }
.w102 { width: 102px; }
.ham4 { width: 14px; height: 12px; margin-left: auto; margin-right: 10px; color: #c8c8c8; }
.masters { height: 121px; flex: none; padding: 1px 32px 0 4px; border-bottom: 2px solid #4c4c4c; }
.mrow { height: 36px; display: flex; align-items: center; justify-content: space-between; font-size: 13.500px; font-weight: 500; color: #e4e4e4; }
.mrow i { width: 22px; height: 28px; background: #fff; border: 1px solid #aaa; }
.pagearea { flex: 1; padding: 5px 0 0 27px; }
.tri { width: 0; height: 0; margin-left: 15px; border: 7px solid transparent; border-top-color: #c8c8c8; border-bottom: 0; }
.thumb { width: 56px; height: 72px; margin-top: 2px; padding: 2px 3px; position: relative; background: #8ac3fa; border: 1px solid #aaa; }
.th-a { position: absolute; left: 22px; top: 1px; width: 11px; height: 13px; background: #fff; color: #000; font: 700 12px/13px "Liberation Sans", sans-serif; text-align: center; }
.th-bar { width: 22px; height: 6px; margin-top: 7px; background: #a56ed4; }
.th-cols { display: flex; gap: 3px; height: 50px; margin-top: 2px; }
.th-cols div { flex: 1; background: repeating-linear-gradient(0deg, #14548c 0 3px, #2d6ba3 3px 4px); }
.pnum { width: 14px; height: 18px; margin: 9px 0 0 18px; background: #0a84f0; color: #fff; font: 700 13px/18px "DejaVu Serif", serif; text-align: center; }
.pfoot { height: 33px; flex: none; display: flex; align-items: center; padding-left: 9px; border-top: 1px solid #4f4f4f; font-size: 13.500px; color: #ddd; white-space: nowrap; }
.pf1 { width: 20px; height: 18px; margin-left: 70px; color: #d0d0d0; }
.pf2 { width: 16px; height: 16px; margin-left: 19px; color: #d0d0d0; }
.pf3 { width: 14px; height: 18px; margin-left: 19px; color: #8c8c8c; }
.pstyles { flex: 1; margin-top: 4px; display: flex; flex-direction: column; background: #565656; }
.psrow { height: 34px; flex: none; display: flex; align-items: center; padding: 0 16px 0 7px; font-size: 15px; letter-spacing: .8px; color: #ddd; }
.psrow em { margin-left: auto; font-style: normal; font-size: 16px; color: #c8c8c8; }
.psrow svg { width: 12px; height: 20px; margin-left: 20px; color: #c8c8c8; }
.pssel { height: 21px; flex: none; padding-left: 43px; background: #4d6884; font-size: 15px; line-height: 20px; letter-spacing: .8px; color: #fff; }
.pssel em { font-style: normal; color: #a9b9c8; }

/* floating swatches */
.swatches { position: absolute; left: 1140px; top: 181px; width: 322px; height: 327px; display: flex; flex-direction: column; background: #565656; border: 1px solid #2f2f2f; border-radius: 4px 4px 0 0; box-shadow: 1px 1px 2px rgba(0,0,0,.5); }
.sw-top { height: 18px; flex: none; display: flex; justify-content: space-between; align-items: center; padding: 0 8px; background: #474747; font-size: 13px; color: #bbb; border-radius: 4px 4px 0 0; }
.cc { font-size: 12px; }
.sw-tabs { height: 26px; flex: none; display: flex; align-items: center; background: #414141; }
.sw-tab { width: 108px; height: 26px; display: flex; align-items: center; padding-left: 6px; background: #565656; font-weight: 700; font-size: 14.500px; letter-spacing: .4px; color: #eaeaea; }
.swham { width: 14px; height: 10px; margin-left: auto; margin-right: 6px; color: #aaa; }
.sw-ctl { height: 52px; flex: none; display: flex; align-items: center; padding: 2px 0 0 8px; }
.fs { width: 40px; height: 40px; flex: none; position: relative; }
.fs-s { position: absolute; right: 0; bottom: 0; width: 25px; height: 26px; background: linear-gradient(to top right, #fff 0 40%, #f00 40% 56%, #fff 56%); }
.fs-f { position: absolute; left: 0; top: 0; width: 27px; height: 27px; background: #fff; color: #ff3f94; font: 700 24px/27px "DejaVu Serif", serif; text-align: center; }
.fs-swap { position: absolute; right: 0; top: 2px; width: 8px; height: 8px; color: #ccc; }
.boxbtn { width: 11px; height: 11px; margin-left: 20px; border: 2px solid #8a8a8a; background: #666; flex: none; }
.tbtn { width: 25px; height: 26px; margin-left: 9px; flex: none; background: #353535; border-radius: 4px; font: 700 16px/26px "DejaVu Serif", serif; text-align: center; color: #c8c8c8; }
.tint { margin-left: 47px; width: 37px; font-size: 14px; letter-spacing: .4px; color: #ddd; }
.tintf { width: 69px; border-width: 1px; }
.tintf .val { padding-left: 6px; font-size: 14.500px; }
.tintf .drop { border-left-width: 1px; }
.pct { margin-left: 4px; font-size: 14px; color: #ccc; }
.sw-list { height: 184px; flex: none; margin: 0 1px; border-top: 1px solid #4c4c4c; border-bottom: 1px solid #4c4c4c; }
.sw-row { height: 29.500px; display: flex; align-items: center; padding-left: 23px; border-bottom: 1px solid #4c4c4c; font-size: 13.500px; color: #cfcfcf; position: relative; }
.sw-row.on { background: #46667f; color: #fff; font-weight: 500; letter-spacing: .9px; border-bottom: 0; }
.chip { width: 17px; height: 17px; flex: none; margin-right: 11px; border: 1px solid #333; outline: 1px solid #777; }
.chip.black { background: #000; }
.chip.white { background: #fff; }
.chip.pink { background: #ff3f94; }
.chip.none { background: linear-gradient(to top right, #fff 0 42%, #f00 42% 58%, #fff 58%); }
.t1 { position: absolute; left: 241px; top: 6px; width: 16px; height: 16px; color: #d0d0d0; }
.t2 { position: absolute; left: 263px; top: 7px; width: 15px; height: 15px; }
.t3 { position: absolute; left: 284px; top: 7px; width: 15px; height: 15px; border: 1px solid #aaa; }
.dots { background: #b8b8b8 radial-gradient(#666 .6px, transparent .7px) 0 0 / 3px 3px; }
.nonebox { background: linear-gradient(to top right, #fff 0 47%, #f00 47% 53%, #fff 53%); }
.reg { background: #666; box-shadow: inset 0 0 0 3px #666, inset 0 0 0 4px #bbb; }
.cmyk { background: linear-gradient(135deg, #f0f 0 25%, transparent 25%), linear-gradient(225deg, #ff0 0 50%, transparent 50%), linear-gradient(to top, #000 0 50%, #0ff 50%); }
.rgb { background: linear-gradient(90deg, #f00 0 33%, #0a0 33% 66%, #2a7de0 66%); }
.sw-foot { height: 32px; flex: none; display: flex; align-items: center; padding-left: 11px; color: #c4c4c4; }
.sf0 { width: 18px; height: 18px; }
.sf1 { width: 13px; height: 13px; margin-left: 125px; background: #c8c8c8 radial-gradient(#555 1px, transparent 1.100px) 0 0 / 4px 4px; flex: none; }
.sf2 { width: 17px; height: 13px; margin-left: 21px; }
.sf3 { width: 15px; height: 15px; margin-left: 23px; }
.sf4 { width: 14px; height: 16px; margin-left: 24px; color: #9a9a9a; }
.sw-grip { flex: 1; display: flex; justify-content: center; border-top: 2px solid #3a3a3a; background: #4f4f4f; }
.g-h.wide { margin: 1px 0 0; }
```
